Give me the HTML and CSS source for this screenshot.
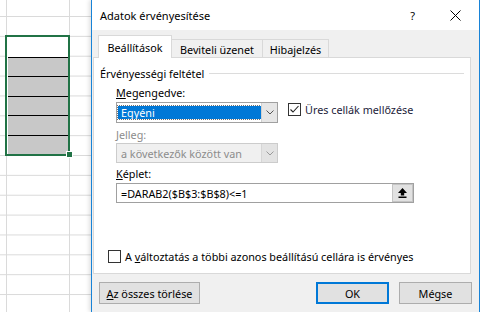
FILE: index.html
```html
<!DOCTYPE html>
<html lang="hu">
<head>
    <meta charset="UTF-8">
    <title>Adatok érvényesítése</title>
    <link rel="stylesheet" href="styles.css">
</head>
<body>

    <!-- Worksheet behind the dialog -->
    <div class="sheet">
        <div class="selection">
            <div class="sel-blank"></div>
            <div class="sel-cell"></div>
            <div class="sel-cell"></div>
            <div class="sel-cell"></div>
            <div class="sel-cell"></div>
            <div class="sel-cell"></div>
            <span class="fill-handle"></span>
        </div>
    </div>

    <!-- Data validation dialog -->
    <div class="dialog">
        <div class="titlebar">
            <span class="title">Adatok érvényesítése</span>
            <span class="help">?</span>
            <svg class="close" width="11" height="11" viewBox="0 0 11 11">
                <path d="M0.5 0.5 L10.5 10.5 M10.5 0.5 L0.5 10.5" stroke="#000" stroke-width="1" fill="none"/>
            </svg>
        </div>

        <div class="dialog-body">
            <div class="tabs">
                <div class="tab tab-active">Beállítások</div>
                <div class="tab tab-input">Beviteli üzenet</div>
                <div class="tab tab-error">Hibajelzés</div>
            </div>

            <div class="panel">
                <div class="group-title">
                    <span>Érvényességi feltétel</span>
                    <span class="group-line"></span>
                </div>

                <div class="fields">
                    <div class="label"><u>M</u>egengedve:</div>
                    <div class="combo-row">
                        <div class="combo">
                            <div class="combo-value">Egyéni</div>
                            <div class="combo-btn">
                                <svg width="8" height="5" viewBox="0 0 8 5"><polyline points="0.5,0.5 4,4 7.5,0.5" fill="none" stroke="#555" stroke-width="1"/></svg>
                            </div>
                        </div>
                        <div class="check-label check-ignore">
                            <span class="checkbox">
                                <svg width="11" height="11" viewBox="0 0 11 11"><polyline points="1.5,5.5 4,8 9.5,2" fill="none" stroke="#222" stroke-width="1.1"/></svg>
                            </span>
                            <span>Üres cellák mellőzése</span>
                        </div>
                    </div>

                    <div class="label label-disabled label-jelleg">Jelleg:</div>
                    <div class="combo combo-disabled">
                        <div class="combo-value">a következők között van</div>
                        <div class="combo-btn">
                            <svg width="8" height="5" viewBox="0 0 8 5"><polyline points="0.5,0.5 4,4 7.5,0.5" fill="none" stroke="#9a9a9a" stroke-width="1"/></svg>
                        </div>
                    </div>

                    <div class="label label-formula"><u>K</u>éplet:</div>
                    <div class="formula">
                        <span class="formula-text">=DARAB2($B$3:$B$8)&lt;=1</span>
                        <span class="ref-btn">
                            <svg width="9" height="10" viewBox="0 0 9 10">
                                <path d="M4.5 0 L9 5 H6.2 V7.5 H2.8 V5 H0 Z" fill="#000"/>
                                <rect x="0.5" y="8.5" width="8" height="1.5" fill="#000"/>
                            </svg>
                        </span>
                    </div>
                </div>

                <div class="check-label check-apply">
                    <span class="checkbox"></span>
                    <span>A <u>v</u>áltoztatás a többi azonos beállítású cellára is érvényes</span>
                </div>
            </div>

            <div class="buttons">
                <button class="btn btn-clear"><u>A</u>z összes törlése</button>
                <button class="btn btn-ok">OK</button>
                <button class="btn btn-cancel">Mégse</button>
            </div>
        </div>
    </div>

</body>
</html>
```

FILE: styles.css
```css
* {
    box-sizing: border-box;
}

body {
    margin: 0;
    width: 480px;
    height: 312px;
    overflow: hidden;
    display: flex;
    font-family: "Noto Sans", sans-serif;
    font-size: 10.8px;
    color: #000;
    background-color: #fff;
}

/* worksheet */
.sheet {
    width: 91px;
    height: 312px;
    padding: 35px 0 0 5px;
    background-color: #fff;
    background-image:
        linear-gradient(to right, transparent 6px, #dadada 6px, #dadada 7px, transparent 7px, transparent 69px, #dadada 69px, #dadada 70px, transparent 70px),
        linear-gradient(to bottom, #dadada 1px, transparent 1px);
    background-size: 100% 100%, 100% 19.86px;
    background-position: 0 0, 0 16px;
    background-repeat: no-repeat, repeat;
}

.selection {
    position: relative;
    width: 65px;
    height: 121px;
    border: 2px solid #217346;
    background-color: #fff;
    padding-left: 1px;
}

.sel-blank {
    height: 19.5px;
}

.sel-cell {
    height: 19.5px;
    border-top: 1px solid #000;
    background-color: #c8c8c8;
}

.fill-handle {
    position: absolute;
    right: -5px;
    bottom: -4px;
    width: 7px;
    height: 7px;
    background-color: #217346;
    border: 1px solid #fff;
}

/* dialog */
.dialog {
    width: 389px;
    height: 312px;
    border-left: 1px solid #1883d7;
    border-right: 1px solid #1883d7;
    background-color: #f0f0f0;
    box-shadow: -2px 0 4px rgba(0, 0, 0, 0.12);
    display: flex;
    flex-direction: column;
}

.titlebar {
    height: 30px;
    background-color: #fff;
    display: flex;
    align-items: center;
    padding-left: 8px;
    padding-right: 18px;
}

.title {
    flex: 1;
    font-size: 11px;
}

.help {
    font-size: 11px;
    margin-right: 35px;
}

.close {
    display: block;
}

.dialog-body {
    flex: 1;
    padding: 5px 8px 0 1px;
}

.tabs {
    display: flex;
    align-items: flex-end;
    height: 22px;
    padding-left: 5px;
}

.tab {
    height: 18px;
    padding-top: 2px;
    border-top: 1px solid #d9d9d9;
    border-right: 1px solid #d9d9d9;
    background-color: #f0f0f0;
    display: flex;
    align-items: center;
    justify-content: center;
}

.tab-active {
    width: 74px;
    height: 23px;
    margin-bottom: -1px;
    padding-top: 1px;
    border-left: 1px solid #d9d9d9;
    background-color: #fff;
    position: relative;
    z-index: 1;
}

.tab-input {
    width: 91px;
}

.tab-error {
    width: 66px;
}

.panel {
    height: 217px;
    background-color: #fff;
    border: 1px solid #d9d9d9;
    padding: 8px 6px 9px 6px;
    display: flex;
    flex-direction: column;
}

.group-title {
    display: flex;
    align-items: center;
    height: 14px;
}

.group-line {
    flex: 1;
    height: 1px;
    margin-left: 5px;
    background-color: #dcdcdc;
}

.fields {
    margin-left: 16px;
}

.label {
    height: 16px;
    line-height: 16px;
    margin-top: 5px;
}

.label-disabled {
    color: #8c8c8c;
}

.label-jelleg {
    margin-top: 4px;
}

.label-formula {
    margin-top: 3px;
}

.combo-row {
    display: flex;
    align-items: flex-start;
    margin-top: 1px;
}

.combo {
    display: flex;
    width: 162px;
    height: 21px;
    border: 1px solid #a0a0a0;
    background-color: #fff;
}

.combo-value {
    flex: 1;
    margin: 3px 0 3px 1px;
    padding-left: 3px;
    display: flex;
    align-items: center;
    background-color: #0078d7;
    color: #fff;
    outline: 1px dotted rgba(0, 0, 0, 0.55);
}

.combo-btn {
    width: 16px;
    display: flex;
    align-items: center;
    justify-content: center;
    background-color: #e6e6e6;
    border-left: 1px solid #d0d0d0;
}

.combo-disabled {
    height: 20px;
    border-color: #cccccc;
    background-color: #f0f0f0;
}

.combo-disabled .combo-value {
    margin: 0;
    padding-left: 4px;
    background-color: transparent;
    color: #8c8c8c;
    outline: none;
}

.combo-disabled .combo-btn {
    background-color: #e3e3e3;
    border-left-color: #d6d6d6;
}

.check-label {
    display: flex;
    align-items: center;
    gap: 4px;
    height: 16px;
}

.check-ignore {
    margin-left: 10px;
    margin-top: -1px;
    color: #1c1c3a;
}

.check-apply {
    margin-top: auto;
    margin-left: 8px;
}

.checkbox {
    width: 13px;
    height: 13px;
    border: 1px solid #333;
    background-color: #fff;
    flex: none;
    display: flex;
    align-items: center;
    justify-content: center;
}

.formula {
    display: flex;
    align-items: stretch;
    width: 298px;
    height: 20px;
    margin-top: 1px;
    border: 1px solid #a0a0a0;
    background-color: #fff;
}

.formula-text {
    flex: 1;
    padding-left: 4px;
    display: flex;
    align-items: center;
}

.ref-btn {
    width: 21px;
    display: flex;
    align-items: center;
    justify-content: center;
    background-color: #e1e1e1;
    border: 1px solid #c4c4c4;
}

.buttons {
    display: flex;
    margin-top: 8px;
}

.btn {
    height: 22px;
    padding: 0;
    font-family: "Noto Sans", sans-serif;
    font-size: 10.8px;
    color: #000;
    background-color: #e1e1e1;
    border: 1px solid #adadad;
}

.btn-clear {
    width: 101px;
    margin-left: 6px;
}

.btn-ok {
    width: 73px;
    margin-left: auto;
    border-color: #0078d7;
    box-shadow: inset 0 0 0 1px #0078d7;
}

.btn-cancel {
    width: 73px;
    margin-left: 10px;
    margin-right: -1px;
}
```
